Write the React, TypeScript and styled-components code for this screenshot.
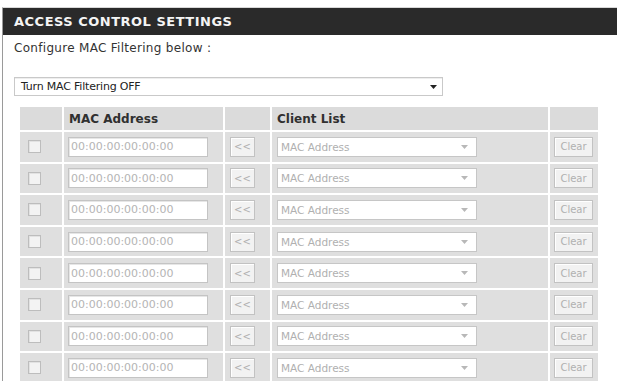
import React from 'react'
import styled, { createGlobalStyle } from 'styled-components'

const GlobalStyle = createGlobalStyle`
  html, body {
    margin: 0;
    padding: 0;
    background: #ffffff;
  }
  body {
    font-family: "DejaVu Sans", Verdana, sans-serif;
    color: #333333;
  }
`

const Page = styled.div`
  width: 617px;
  height: 381px;
  overflow: hidden;
  padding-top: 7px;
  box-sizing: border-box;
`

const Panel = styled.div`
  margin-left: 2px;
  border-left: 1px solid #9a9a9a;
  border-top: 1px solid #d8d8d8;
  height: 100%;
`

const TitleBar = styled.div`
  background: #2a2a2a;
  height: 27px;
  display: flex;
  align-items: center;
  padding-left: 11px;
  color: #f4f4f4;
  font-size: 13px;
  font-weight: bold;
  letter-spacing: 0.5px;
`

const Intro = styled.div`
  font-size: 12px;
  letter-spacing: 0.3px;
  color: #333333;
  padding: 5px 0 0 11px;
  height: 16px;
  line-height: 16px;
`

const FilterSelect = styled.div`
  margin: 21px 0 0 11px;
  width: 429px;
  height: 19px;
  border: 1px solid #c9c9c9;
  box-sizing: border-box;
  display: flex;
  align-items: center;
  justify-content: space-between;
  padding: 0 5px 0 6px;
  font-size: 11px;
  letter-spacing: -0.2px;
  color: #222222;
  box-shadow: inset 0 1px 0 #eeeeee;
`

const Table = styled.div`
  margin: 11px 0 0 17px;
  display: grid;
  grid-template-columns: 42px 159px 45px 276px 48px;
  grid-template-rows: 23px;
  grid-auto-rows: 29.6px;
  gap: 2px;
`

const HeadCell = styled.div`
  background: #dbdbdb;
  font-size: 12px;
  font-weight: bold;
  color: #303030;
  display: flex;
  align-items: center;
  padding-left: 5px;
`

const Cell = styled.div<{ $pad?: number }>`
  background: #dfdfdf;
  display: flex;
  align-items: center;
  padding-left: ${(p) => p.$pad ?? 4}px;
`

const Checkbox = styled.div`
  width: 13px;
  height: 13px;
  box-sizing: border-box;
  border: 1px solid #bdbdbd;
  background: #f3f3f3;
  box-shadow: inset 1px 1px 0 #e2e2e2;
`

const MacInput = styled.div`
  width: 140px;
  height: 20px;
  box-sizing: border-box;
  border: 1px solid #c4c4c4;
  background: #ffffff;
  font-size: 11px;
  color: #b4b4b4;
  display: flex;
  align-items: center;
  padding-left: 2px;
  box-shadow: inset 1px 1px 0 #e6e6e6;
`

const SmallButton = styled.div<{ $w: number }>`
  width: ${(p) => p.$w}px;
  height: 20px;
  box-sizing: border-box;
  border: 1px solid #c2c2c2;
  background: #f2f2f2;
  color: #b0b0b0;
  font-size: 10px;
  display: flex;
  align-items: center;
  justify-content: center;
  box-shadow: inset 1px 1px 0 #ffffff;
`

const ClientSelect = styled.div`
  width: 200px;
  height: 20px;
  box-sizing: border-box;
  border: 1px solid #c6c6c6;
  background: #ffffff;
  font-size: 10.5px;
  color: #b0b0b0;
  display: flex;
  align-items: center;
  justify-content: space-between;
  padding: 0 8px 0 3px;
`

const Caret = ({ color }: { color: string }) => (
  <svg width="7" height="4" viewBox="0 0 7 4">
    <path d="M0 0 L7 0 L3.5 4 Z" fill={color} />
  </svg>
)

const rows = Array.from({ length: 8 }, (_, i) => i)

export default function App() {
  return (
    <>
      <GlobalStyle />
      <Page>
        <Panel>
          <TitleBar>ACCESS CONTROL SETTINGS</TitleBar>
          <Intro>Configure MAC Filtering below :</Intro>
          <FilterSelect>
            <span>Turn MAC Filtering OFF</span>
            <Caret color="#222222" />
          </FilterSelect>
          <Table>
            <HeadCell />
            <HeadCell>MAC Address</HeadCell>
            <HeadCell />
            <HeadCell>Client List</HeadCell>
            <HeadCell />
            {rows.map((r) => (
              <React.Fragment key={r}>
                <Cell $pad={8}>
                  <Checkbox />
                </Cell>
                <Cell>
                  <MacInput>00:00:00:00:00:00</MacInput>
                </Cell>
                <Cell $pad={5}>
                  <SmallButton $w={25}>&lt;&lt;</SmallButton>
                </Cell>
                <Cell $pad={5}>
                  <ClientSelect>
                    <span>MAC Address</span>
                    <Caret color="#b8b8b8" />
                  </ClientSelect>
                </Cell>
                <Cell>
                  <SmallButton $w={39}>Clear</SmallButton>
                </Cell>
              </React.Fragment>
            ))}
          </Table>
        </Panel>
      </Page>
    </>
  )
}
